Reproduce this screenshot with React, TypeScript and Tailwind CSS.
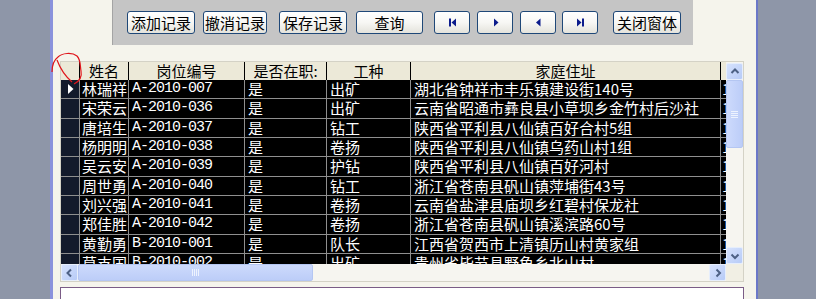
import React from "react";

const rows: [string, string, string, string, string][] = [
  ["林瑞祥", "A-2010-007", "是", "出矿", "湖北省钟祥市丰乐镇建设街140号"],
  ["宋荣云", "A-2010-036", "是", "出矿", "云南省昭通市彝良县小草坝乡金竹村后沙社"],
  ["唐培生", "A-2010-037", "是", "钻工", "陕西省平利县八仙镇百好合村5组"],
  ["杨明明", "A-2010-038", "是", "卷扬", "陕西省平利县八仙镇乌药山村1组"],
  ["吴云安", "A-2010-039", "是", "护钻", "陕西省平利县八仙镇百好河村"],
  ["周世勇", "A-2010-040", "是", "钻工", "浙江省苍南县矾山镇萍埔街43号"],
  ["刘兴强", "A-2010-041", "是", "卷扬", "云南省盐津县庙坝乡红碧村保龙社"],
  ["郑佳胜", "A-2010-042", "是", "卷扬", "浙江省苍南县矾山镇溪滨路60号"],
  ["黄勤勇", "B-2010-001", "是", "队长", "江西省贺西市上清镇历山村黄家组"],
  ["莫支国", "B-2010-002", "是", "出矿", "贵州省毕节县野鱼乡北山村"],
];

const font = "font-['Noto_Sans_CJK_SC','Noto_Sans',sans-serif]";

function TextButton({ label, className }: { label: string; className: string }) {
  return (
    <button
      type="button"
      className={`h-[23px] rounded-[3px] border border-[#1f4878] bg-linear-to-b from-white via-[#f7f7f4] to-[#e4e3dc] text-[15px] leading-none text-black ${className}`}
    >
      {label}
    </button>
  );
}

function NavButton({ kind, className }: { kind: "first" | "next" | "prev" | "last"; className: string }) {
  return (
    <button
      type="button"
      className={`flex h-[23px] w-[36px] items-center justify-center rounded-[3px] border border-[#1f4878] bg-linear-to-b from-white via-[#f7f7f4] to-[#e4e3dc] ${className}`}
    >
      <svg width="9" height="9" viewBox="0 0 9 9" fill="#0c1c8c">
        {kind === "first" && (
          <>
            <rect x="1" y="0.5" width="2" height="8" />
            <path d="M8 0.5 L3.5 4.5 L8 8.5 Z" />
          </>
        )}
        {kind === "next" && <path d="M3 0.5 L7.5 4.5 L3 8.5 Z" />}
        {kind === "prev" && <path d="M6.5 0.5 L2 4.5 L6.5 8.5 Z" />}
        {kind === "last" && (
          <>
            <path d="M1 0.5 L5.5 4.5 L1 8.5 Z" />
            <rect x="6" y="0.5" width="2" height="8" />
          </>
        )}
      </svg>
    </button>
  );
}

function ScrollArrow({ dir }: { dir: "up" | "down" | "left" | "right" }) {
  const d = {
    up: "M2.5 7 L6 3.5 L9.5 7",
    down: "M2.5 4.5 L6 8 L9.5 4.5",
    left: "M7 2.5 L3.5 6 L7 9.5",
    right: "M4.5 2.5 L8 6 L4.5 9.5",
  }[dir];
  return (
    <div className="flex h-[17px] w-[17px] shrink-0 items-center justify-center rounded-[2px] border border-[#e6eefc] bg-linear-to-br from-[#d6e2fd] to-[#b7cbf7]">
      <svg width="12" height="12" viewBox="0 0 12 12" fill="none" stroke="#4d6185" strokeWidth="2">
        <path d={d} />
      </svg>
    </div>
  );
}

export default function App() {
  return (
    <div className={`relative flex h-[299px] w-[816px] overflow-hidden bg-[#8e96a8] ${font}`}>
      <div className="w-[50px] shrink-0 bg-[#8e96a8]" />
      <div className="w-[3px] shrink-0 bg-[#8a92dc]" />

      <div className="flex w-[703px] shrink-0 flex-col overflow-hidden bg-[#f5f4ec]">
        {/* toolbar */}
        <div className="ml-[59px] flex h-[45px] w-[581px] shrink-0 items-start border-l border-[#a4a4a4] bg-[#c5c5c5] pl-[14px] pt-[11px]">
          <TextButton label="添加记录" className="w-[68px]" />
          <TextButton label="撤消记录" className="ml-[8px] w-[64px]" />
          <TextButton label="保存记录" className="ml-[12px] w-[68px]" />
          <TextButton label="查询" className="ml-[9px] w-[67px]" />
          <NavButton kind="first" className="ml-[11px]" />
          <NavButton kind="next" className="ml-[7px]" />
          <NavButton kind="prev" className="ml-[7px]" />
          <NavButton kind="last" className="ml-[6px]" />
          <TextButton label="关闭窗体" className="ml-[15px] w-[68px]" />
        </div>

        {/* datasheet */}
        <div className="ml-[7px] mt-[16px] flex h-[221px] w-[684px] shrink-0 flex-col border border-[#d4d2c6]">
          <div className="flex h-[202px] shrink-0">
            <div className="w-[665px] overflow-hidden">
              <div className="flex h-[18px] bg-[#ece9d8] text-[15px] leading-[18px] text-black">
                <div className="w-[19px] border-r border-black" />
                <div className="w-[49px] border-r border-black text-center">姓名</div>
                <div className="w-[116px] border-r border-black text-center">岗位编号</div>
                <div className="w-[82px] border-r border-black text-center">是否在职:</div>
                <div className="w-[84px] border-r border-black text-center">工种</div>
                <div className="w-[310px] border-r border-black text-center">家庭住址</div>
                <div className="w-[5px]" />
              </div>
              <div className="h-[184px] overflow-hidden bg-black">
                {rows.map((r, i) => (
                  <div
                    key={r[1]}
                    className="flex h-[19.33px] border-b border-[#8f8f8f] text-[15px] leading-[18px] text-white"
                  >
                    <div className="flex w-[19px] items-center justify-center border-r border-[#8f8f8f] bg-[#131a2b]">
                      {i === 0 && (
                        <svg width="7" height="10" viewBox="0 0 7 10" fill="white">
                          <path d="M1 0 L6.5 5 L1 10 Z" />
                        </svg>
                      )}
                    </div>
                    <div className="w-[49px] overflow-hidden whitespace-nowrap border-r border-[#8f8f8f] pl-[2px]">{r[0]}</div>
                    <div className="w-[116px] whitespace-nowrap border-r border-[#8f8f8f] pl-[3px] font-['Liberation_Mono',monospace] tracking-[-1px]">
                      {r[1]}
                    </div>
                    <div className="w-[82px] border-r border-[#8f8f8f] pl-[3px]">{r[2]}</div>
                    <div className="w-[84px] border-r border-[#8f8f8f] pl-[3px]">{r[3]}</div>
                    <div className="w-[310px] overflow-hidden whitespace-nowrap border-r border-[#8f8f8f] pl-[3px]">{r[4]}</div>
                    <div className="w-[5px] overflow-hidden whitespace-nowrap pl-[1px]">1</div>
                  </div>
                ))}
              </div>
            </div>
            {/* vertical scrollbar */}
            <div className="flex w-[17px] flex-col bg-[#f6f5f0] pt-[1px]">
              <ScrollArrow dir="up" />
              <div className="flex h-[68px] shrink-0 items-center justify-center rounded-[2px] border border-[#b4c6f2] bg-linear-to-r from-[#cddafc] to-[#bccdf8]">
                <div className="flex flex-col gap-[1px]">
                  <div className="h-px w-[7px] bg-[#eef3fe]" />
                  <div className="h-px w-[7px] bg-[#eef3fe]" />
                  <div className="h-px w-[7px] bg-[#eef3fe]" />
                  <div className="h-px w-[7px] bg-[#eef3fe]" />
                </div>
              </div>
              <div className="flex-1" />
              <ScrollArrow dir="down" />
            </div>
          </div>
          {/* horizontal scrollbar */}
          <div className="flex h-[17px] shrink-0">
            <div className="flex w-[665px] bg-[#f6f5f0]">
              <ScrollArrow dir="left" />
              <div className="flex w-[235px] shrink-0 items-center justify-center rounded-[2px] border border-[#b4c6f2] bg-linear-to-b from-[#cddafc] to-[#bccdf8]">
                <div className="flex gap-[1px]">
                  <div className="h-[7px] w-px bg-[#eef3fe]" />
                  <div className="h-[7px] w-px bg-[#eef3fe]" />
                  <div className="h-[7px] w-px bg-[#eef3fe]" />
                  <div className="h-[7px] w-px bg-[#eef3fe]" />
                </div>
              </div>
              <div className="flex-1" />
              <ScrollArrow dir="right" />
            </div>
            <div className="w-[17px] bg-[#f1efe4]" />
          </div>
        </div>

        {/* subform */}
        <div className="ml-[7px] mt-[5px] h-[30px] w-[684px] shrink-0 border border-[#7a5c86] bg-white" />
      </div>

      <div className="w-[2px] shrink-0 bg-[#6b78c8]" />
      <div className="flex-1 bg-[#8e96a8]" />

      {/* red hand-drawn annotation */}
      <svg className="pointer-events-none absolute left-0 top-0" width="816" height="299" fill="none" stroke="#e0151b" strokeWidth="1.2">
        <path d="M52 72 C52 66 54 60 58 57 C62 53 72 52 77 56 C81 60 80 66 81 71 C82 76 80 81 74 84" />
        <path d="M57 60 C60 68 65 76 72 82" />
      </svg>
    </div>
  );
}
